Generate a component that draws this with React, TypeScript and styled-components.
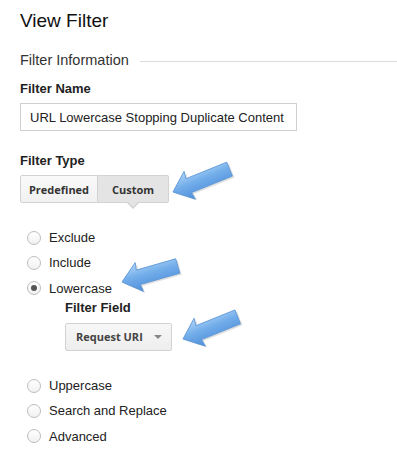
import React from "react";
import styled, { createGlobalStyle } from "styled-components";

// THEMING
const textColor = "#222";
const borderColor = "#d2d2d2";
const uiFont = `"Open Sans", "Liberation Sans", sans-serif`;

const GlobalStyle = createGlobalStyle`
  html, body {
    margin: 0;
    background: #fff;
  }
  body {
    font-family: "Liberation Sans", Arial, sans-serif;
    color: ${textColor};
  }
`;

const Page = styled.div`
  position: relative;
  width: 397px;
  height: 458px;
  padding: 10px 0 0 20px;
  box-sizing: border-box;
  overflow: hidden;
`;

const Title = styled.h1`
  margin: 0;
  font-size: 19px;
  line-height: 22px;
  font-weight: normal;
  color: #111;
`;

const SectionHead = styled.div`
  display: flex;
  align-items: center;
  gap: 11px;
  margin-top: 19px;
  font-size: 14.5px;
  line-height: 18px;
  color: #333;
  &::after {
    content: "";
    flex: 1;
    height: 1px;
    margin-top: 3px;
    background: #dcdcdc;
  }
`;

const FieldLabel = styled.div<{ $top: number }>`
  margin-top: ${({ $top }) => $top}px;
  font-size: 13px;
  line-height: 16px;
  font-weight: bold;
  color: #222;
`;

const TextInput = styled.div`
  margin-top: 6px;
  width: 277px;
  height: 28px;
  box-sizing: border-box;
  border: 1px solid #cfcfcf;
  padding: 0 9px;
  display: flex;
  align-items: center;
  font-size: 13px;
  color: ${textColor};
`;

const Segmented = styled.div`
  margin-top: 6px;
  display: flex;
  width: max-content;
`;

const Segment = styled.div<{ $active?: boolean; $width: number }>`
  position: relative;
  width: ${({ $width }) => $width}px;
  height: 28px;
  box-sizing: border-box;
  display: flex;
  align-items: center;
  justify-content: center;
  font-family: ${uiFont};
  font-size: 11px;
  font-weight: 700;
  color: #333;
  border: 1px solid ${borderColor};
  background: ${({ $active }) =>
    $active ? "#e4e4e4" : "linear-gradient(#f9f9f9, #f1f1f1)"};
  &:first-child {
    border-radius: 2px 0 0 2px;
  }
  &:last-child {
    border-left: none;
    border-radius: 0 2px 2px 0;
  }
  &::before,
  &::after {
    display: ${({ $active }) => ($active ? "block" : "none")};
    content: "";
    position: absolute;
    left: 50%;
    width: 0;
    height: 0;
    border-style: solid;
  }
  &::before {
    top: 100%;
    margin-left: -7px;
    border-width: 7px 7px 0 7px;
    border-color: ${borderColor} transparent transparent transparent;
  }
  &::after {
    top: calc(100% - 1px);
    margin-left: -6px;
    border-width: 6px 6px 0 6px;
    border-color: #e4e4e4 transparent transparent transparent;
  }
`;

const RadioList = styled.div<{ $top: number }>`
  margin-top: ${({ $top }) => $top}px;
  display: flex;
  flex-direction: column;
`;

const RadioRow = styled.label`
  display: flex;
  align-items: center;
  gap: 8px;
  height: 25.3px;
  padding-left: 7px;
  font-size: 13px;
  color: ${textColor};
`;

const RadioDot = styled.span<{ $checked?: boolean }>`
  width: 14px;
  height: 14px;
  box-sizing: border-box;
  border-radius: 50%;
  border: 1px solid #bdbdbd;
  background: linear-gradient(#fff, #f1f1f1);
  display: flex;
  align-items: center;
  justify-content: center;
  &::after {
    content: "";
    display: ${({ $checked }) => ($checked ? "block" : "none")};
    width: 6px;
    height: 6px;
    border-radius: 50%;
    background: #555;
  }
`;

const SubField = styled.div`
  padding-left: 45px;
  margin-top: -1px;
`;

const Select = styled.div`
  margin-top: 7px;
  width: 107px;
  height: 28px;
  box-sizing: border-box;
  border: 1px solid ${borderColor};
  border-radius: 2px;
  background: linear-gradient(#f7f7f7, #eeeeee);
  display: flex;
  align-items: center;
  justify-content: space-between;
  padding: 0 9px 0 10px;
  font-family: ${uiFont};
  font-size: 11px;
  font-weight: 700;
  color: #444;
  &::after {
    content: "";
    width: 0;
    height: 0;
    border-style: solid;
    border-width: 4px 4px 0 4px;
    border-color: #888 transparent transparent transparent;
  }
`;

// annotation arrows drawn over the form
const ArrowSvg = styled.svg`
  position: absolute;
  overflow: visible;
  pointer-events: none;
`;

interface ArrowProps {
  x: number;
  y: number;
  angle: number;
  length: number;
}

const Arrow = ({ x, y, angle, length }: ArrowProps) => {
  const id = `grad-${x}-${y}`;
  const pts = `0,0 18,-15 17,-7.5 ${length},-7.5 ${length},7.5 17,7.5 18,15`;
  return (
    <ArrowSvg width="1" height="1" style={{ left: x, top: y }}>
      <defs>
        <linearGradient id={id} x1="0" y1="0" x2="0" y2="1">
          <stop offset="0" stopColor="#b3d7f8" />
          <stop offset="0.45" stopColor="#73aeea" />
          <stop offset="1" stopColor="#4f8fdb" />
        </linearGradient>
      </defs>
      <g transform={`rotate(${angle})`}>
        <polygon
          points={pts}
          transform="translate(1.5,2)"
          fill="rgba(0,0,0,0.12)"
        />
        <polygon
          points={pts}
          fill={`url(#${id})`}
          stroke="#5a95d6"
          strokeWidth="0.8"
          strokeLinejoin="round"
        />
      </g>
    </ArrowSvg>
  );
};

const upper = ["Exclude", "Include", "Lowercase"];
const lower = ["Uppercase", "Search and Replace", "Advanced"];

const App = () => {
  return (
    <Page>
      <GlobalStyle />
      <Title>View Filter</Title>
      <SectionHead>Filter Information</SectionHead>
      <FieldLabel $top={12}>Filter Name</FieldLabel>
      <TextInput>URL Lowercase Stopping Duplicate Content</TextInput>
      <FieldLabel $top={22}>Filter Type</FieldLabel>
      <Segmented>
        <Segment $width={78}>Predefined</Segment>
        <Segment $width={71} $active>
          Custom
        </Segment>
      </Segmented>
      <RadioList $top={22}>
        {upper.map((name) => (
          <RadioRow key={name}>
            <RadioDot $checked={name === "Lowercase"} />
            {name}
          </RadioRow>
        ))}
      </RadioList>
      <SubField>
        <FieldLabel $top={0}>Filter Field</FieldLabel>
        <Select>Request URI</Select>
      </SubField>
      <RadioList $top={22}>
        {lower.map((name) => (
          <RadioRow key={name}>
            <RadioDot />
            {name}
          </RadioRow>
        ))}
      </RadioList>
      <Arrow x={173} y={192} angle={-22} length={61} />
      <Arrow x={122} y={282} angle={-16} length={58} />
      <Arrow x={183} y={339} angle={-22} length={59} />
    </Page>
  );
};

export default App;
